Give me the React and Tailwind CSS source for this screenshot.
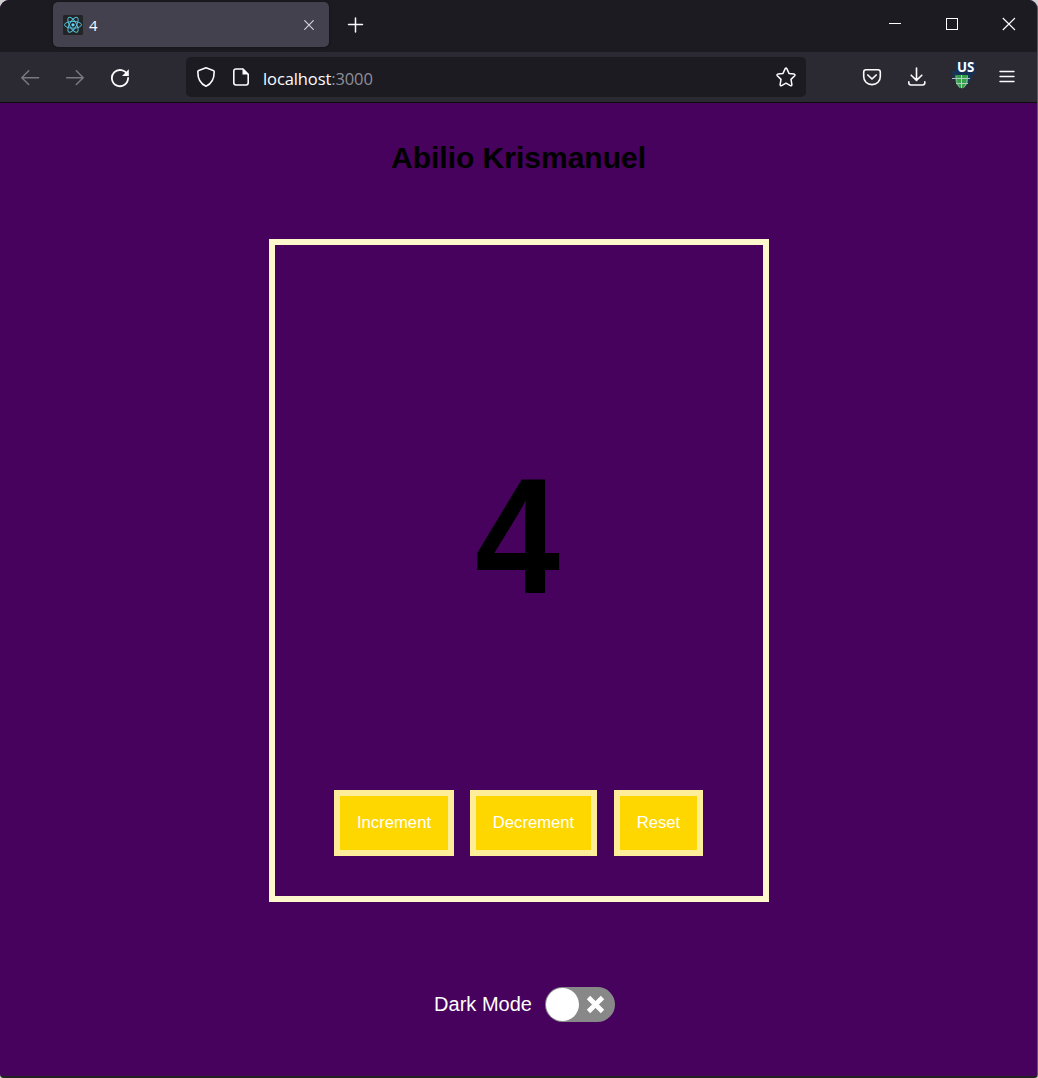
import React, { useState } from "react";

const stroke = { fill: "none", stroke: "#fbfbfe", strokeWidth: 1.6, strokeLinecap: "round", strokeLinejoin: "round" };

function ReactLogo() {
  return (
    <svg className="ml-[10px] h-5 w-5 shrink-0" viewBox="0 0 20 20">
      <rect width="20" height="20" rx="1.5" fill="#222426" />
      <g fill="none" stroke="#56bfd8" strokeWidth="1">
        <ellipse cx="10" cy="9.8" rx="8.5" ry="3.4" />
        <ellipse cx="10" cy="9.8" rx="8.5" ry="3.4" transform="rotate(60 10 9.8)" />
        <ellipse cx="10" cy="9.8" rx="8.5" ry="3.4" transform="rotate(120 10 9.8)" />
      </g>
      <circle cx="10" cy="9.8" r="1.6" fill="#61dafb" />
    </svg>
  );
}

function TitleBar({ count }) {
  return (
    <div className="flex h-[52px] bg-[#1c1b22]">
      <div className="mt-[2px] ml-[53px] flex h-[45px] w-[276px] items-center rounded-[5px] bg-[#42414d] shadow-[0_0_3px_rgba(0,0,0,0.5)]">
        <ReactLogo />
        <span className="mt-px ml-[6px] flex-1 text-[15px] leading-5 text-[#fbfbfe]">{count}</span>
        <svg className="mr-[10px] h-5 w-5" viewBox="0 0 20 20">
          <path d="M5.7 5.7L14.3 14.3M14.3 5.7L5.7 14.3" {...stroke} stroke="#d2d2d9" strokeWidth="1.2" />
        </svg>
      </div>
      <svg className="mt-[15px] ml-4 h-5 w-5" viewBox="0 0 20 20">
        <path d="M10.5 3v14M3.5 9.5h14" {...stroke} strokeWidth="1.5" />
      </svg>
      <div className="flex-1" />
      <div className="mr-[21px] flex h-12 items-center gap-[43px]">
        <svg className="h-[14px] w-[14px]" viewBox="0 0 14 14">
          <path d="M1 6.5h12" stroke="#fff" strokeWidth="1" />
        </svg>
        <svg className="h-[14px] w-[14px]" viewBox="0 0 14 14">
          <rect x="1.5" y="1.5" width="11" height="11" fill="none" stroke="#fff" />
        </svg>
        <svg className="h-[14px] w-[14px]" viewBox="0 0 14 14">
          <path d="M.8 1L13 13M13 1L.8 13" fill="none" stroke="#fff" strokeWidth="1.1" />
        </svg>
      </div>
    </div>
  );
}

function LocaleIcon() {
  return (
    <div className="relative ml-[22px] h-[30px] w-[27px]">
      <svg className="h-[30px] w-[27px]" viewBox="0 0 27 30">
        <path d="M3 9h19v8l-3 5-5 4-5-2-5-8z" fill="#173557" />
        <path d="M6.500 13h12.500v5c0 4-2.200 7-6.200 8.500C8.800 25 6.500 22 6.500 18z" fill="#35a14a" />
        <path d="M3 16.500h18M7 21.500h12M12.500 13v13" fill="none" stroke="#bfd5cd" strokeWidth=".9" />
        <path d="M7 14q0 8 4 12M18.500 14q0 8-4 12" fill="none" stroke="#9fbfb2" strokeWidth=".7" />
        <rect x="7.500" y="-.5" width="19" height="13" rx="1.500" fill="#143057" />
      </svg>
      <span className="absolute top-[-1px] left-[8px] origin-left scale-x-[0.98] font-['Noto_Sans',sans-serif] text-[13.500px] leading-[13px] font-bold text-white">US</span>
    </div>
  );
}

function ToolBar() {
  return (
    <div className="flex h-[51px] border-b border-[#0c0c0d] bg-[#2b2a33]">
      <div className="ml-5 flex h-[51px] w-[166px] shrink-0 items-center gap-[25px]">
        <svg className="h-5 w-5" viewBox="0 0 20 20">
          <path d="M1.800 9.700h16.800M8.700 2.700L1.800 9.700l6.900 6.800" {...stroke} stroke="#7a7980" strokeWidth="1.500" />
        </svg>
        <svg className="h-5 w-5" viewBox="0 0 20 20">
          <path d="M1.600 9.700h16.800M11.300 2.700l6.900 7-6.900 6.800" {...stroke} stroke="#7a7980" strokeWidth="1.500" />
        </svg>
        <svg className="h-5 w-5" viewBox="0 0 20 20">
          <path d="M17.400 6.800A8.100 8.100 0 1 0 18.100 10" {...stroke} strokeWidth="1.800" />
          <path d="M18.800 1.300v6.700h-6.700z" fill="#fbfbfe" />
        </svg>
      </div>
      <div className="mt-[5px] flex h-10 w-[620px] items-center rounded-[5px] bg-[#1c1b22]">
        <svg className="ml-[10px] h-5 w-5" viewBox="0 0 20 20">
          <path d="M10 .8L17.200 3.400q1 .4 1 1.400C18.200 12 15.500 17 10 19.200 4.500 17 1.800 12 1.800 4.800q0-1 1-1.400z" {...stroke} />
        </svg>
        <svg className="ml-[15px] h-5 w-5" viewBox="0 0 20 20">
          <path d="M12 2H5q-2.200 0-2.200 2.200v11.600Q2.800 18 5 18h10q2.200 0 2.200-2.200V7.200z" {...stroke} />
          <path d="M11.500 1.500v6h6z" fill="#fbfbfe" />
        </svg>
        <span className="mt-[3px] ml-3 flex-1 text-[16.500px] leading-5 tracking-[-0.1px] text-[#8f8f98]">
          <span className="text-[#fbfbfe]">localhost</span>:3000
        </span>
        <svg className="mr-[10px] h-5 w-5" viewBox="0 0 20 20">
          <path d="M9.200 1.600q.8-1.300 1.600 0L13 6.400l5.200.7q1.300.5.500 1.600L15 12.400l.9 5.200q-.2 1.500-1.500 1L10 16.200l-4.400 2.400q-1.300.5-1.500-1L5 12.400 1.300 8.700q-.8-1.100.5-1.600L7 6.400z" {...stroke} strokeWidth="1.500" />
        </svg>
      </div>
      <div className="ml-[56px] flex h-[50px] items-center">
        <svg className="h-5 w-5" viewBox="0 0 20 20">
          <path d="M4 2.800h12q2.300 0 2.300 2.300v4.400C18.300 14 15 17.600 10 17.600S1.700 14 1.700 9.500V5.100Q1.700 2.800 4 2.800z" {...stroke} />
          <path d="M5.800 8l4.200 4 4.200-4" {...stroke} strokeWidth="1.700" />
        </svg>
        <svg className="ml-[25px] h-5 w-5" viewBox="0 0 20 20">
          <path d="M9.500 1v12M4.200 8.200l5.300 5.200 5.300-5.200M1.800 14.800v1q0 2.200 2.200 2.200h11.600q2.200 0 2.200-2.200v-1" {...stroke} />
        </svg>
        <LocaleIcon />
        <svg className="ml-[21px] h-5 w-5" viewBox="0 0 20 20">
          <path d="M3 4.500h14M3 9.500h14M3 14.500h14" {...stroke} strokeWidth="1.400" />
        </svg>
      </div>
    </div>
  );
}

function CounterButton({ children, onClick, className }) {
  return (
    <button onClick={onClick} className={`h-[66px] border-[6px] border-[#ffee99] bg-[#ffd700] pb-[2px] pl-px text-center text-[16.667px] text-white ${className}`}>
      {children}
    </button>
  );
}

export default function App() {
  const [count, setCount] = useState(4);
  const [dark, setDark] = useState(false);
  return (
    <div className="h-[1078px] w-[1038px] overflow-hidden bg-[#d0d0d0] font-['Open_Sans',sans-serif]">
      <div className="flex h-[1078px] flex-col overflow-hidden rounded-t-[9px] rounded-b-[4px] border-r border-b-2 border-r-[#5b5a60] border-b-[#222222] bg-[#46025c]">
        <TitleBar count={count} />
        <ToolBar />
        <main className="flex flex-1 flex-col items-center font-['Liberation_Sans',Arial,sans-serif]">
          <h1 className="mt-[38px] text-[30px] leading-[34px] font-bold text-black">Abilio Krismanuel</h1>
          <section className="mt-[64px] flex h-[663px] w-[500px] flex-col border-[6px] border-[#fff8cc]">
            <div className="mt-[199px] mr-[3px] origin-center scale-x-[0.955] scale-y-[1.036] text-center text-[160px] leading-[184px] font-bold text-black">{count}</div>
            <div className="mt-[162px] ml-[59px] flex">
              <CounterButton className="w-[120px]" onClick={() => setCount(count + 1)}>Increment</CounterButton>
              <CounterButton className="ml-4 w-[127px]" onClick={() => setCount(count - 1)}>Decrement</CounterButton>
              <CounterButton className="ml-[17px] w-[89px]" onClick={() => setCount(0)}>Reset</CounterButton>
            </div>
          </section>
          <label className="mt-[85px] ml-[12px] flex h-[35px] items-center text-[20px] text-white">
            <span className="mr-[13px] mb-[2px]">Dark Mode</span>
            <button onClick={() => setDark(!dark)} className="flex h-[35px] w-[70px] items-center rounded-full bg-[#888888]">
              <span className="ml-px h-[33px] w-[33px] rounded-full bg-white" />
              <svg className="ml-[7px] h-5 w-5" viewBox="0 0 20 20">
                <path d="M2.500 2.500l14 14M16.500 2.500l-14 14" stroke="#fff" strokeWidth="4.800" />
              </svg>
            </button>
          </label>
        </main>
      </div>
    </div>
  );
}
